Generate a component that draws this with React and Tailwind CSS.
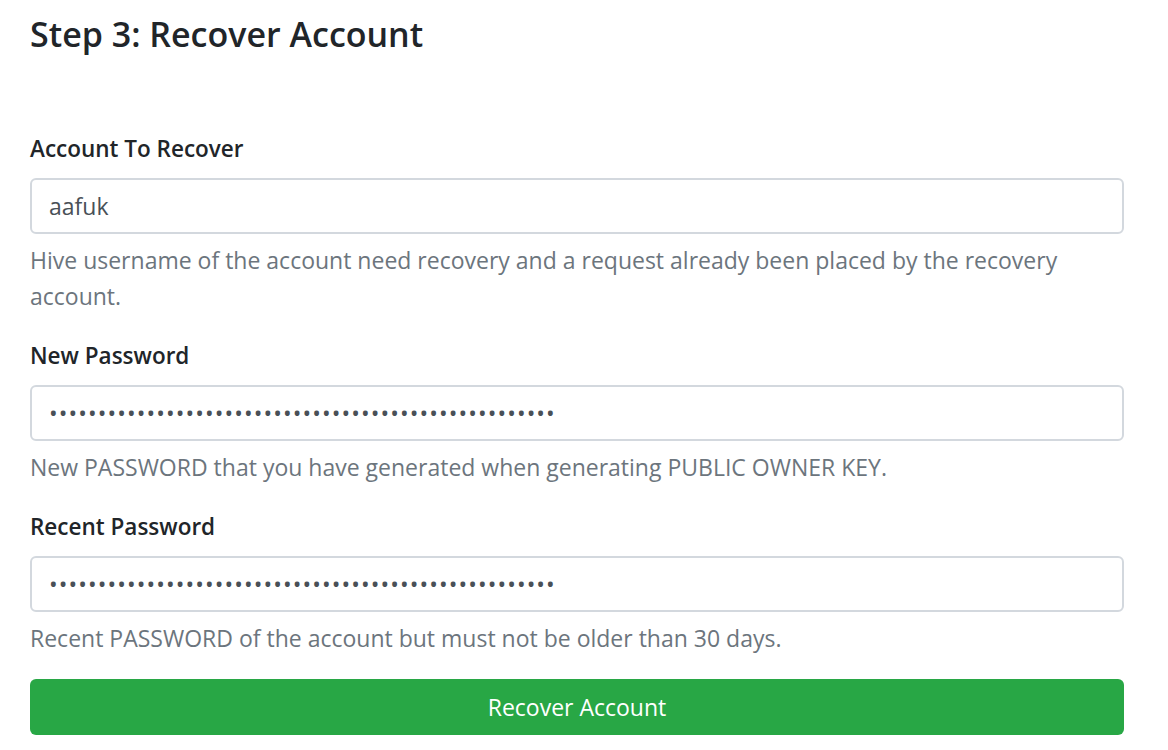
import React from "react";

const font = { fontFamily: '"Open Sans", "Noto Sans", sans-serif' };

function Field({ label, value, type = "text", help }) {
  return (
    <div className="mb-[24px]">
      <label className="block text-[22.5px] leading-[36px] font-semibold text-[#212529] mb-[11px]">
        {label}
      </label>
      <input
        type={type}
        readOnly
        value={value}
        className={
          "block w-full h-[56px] px-[17px] rounded-[6px] border-2 border-[#d3d8de] bg-white text-[23px] text-[#495057] outline-none " +
          (type === "password" ? "tracking-[1.1px]" : "")
        }
        style={font}
      />
      <div className="mt-[8px] text-[23px] leading-[36px] text-[#6c757d]">{help}</div>
    </div>
  );
}

export default function App() {
  const pw = "x".repeat(52);
  return (
    <div className="min-h-[750px] bg-white pl-[30px] pr-[44px] pt-[13px]" style={font}>
      <h3 className="text-[34px] leading-[43px] font-semibold text-[#212529] mb-[75px]">
        Step 3: Recover Account
      </h3>
      <Field
        label="Account To Recover"
        value="aafuk"
        help="Hive username of the account need recovery and a request already been placed by the recovery account."
      />
      <Field
        label="New Password"
        type="password"
        value={pw}
        help="New PASSWORD that you have generated when generating PUBLIC OWNER KEY."
      />
      <Field
        label="Recent Password"
        type="password"
        value={pw}
        help="Recent PASSWORD of the account but must not be older than 30 days."
      />
      <button
        className="block w-full h-[56px] -mt-[1px] rounded-[6px] bg-[#28a745] text-white text-[23px]"
        style={font}
      >
        Recover Account
      </button>
    </div>
  );
}
